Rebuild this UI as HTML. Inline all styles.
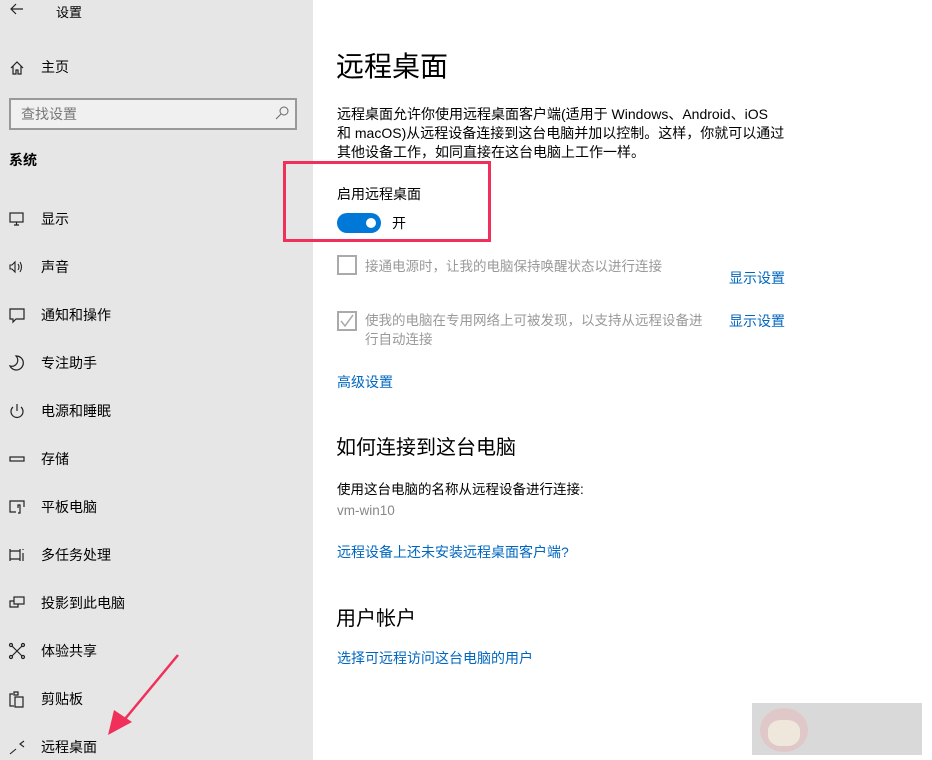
<!DOCTYPE html><html><head><meta charset="utf-8"><style>
*{margin:0;padding:0;box-sizing:border-box}
body{width:932px;height:760px;overflow:hidden;background:#fff;font-family:"Liberation Sans","Noto Sans CJK SC",sans-serif;color:#000;position:relative;font-size:14px}
.side{position:absolute;left:0;top:0;width:313px;height:760px;background:#e6e6e6}
.a{position:absolute;white-space:nowrap}
.it{position:absolute;left:41px;font-size:14px;line-height:20px}
.ic{position:absolute;left:8px;width:18px;height:18px}
.link{color:#0067c0}
.gray{color:#999}
</style></head><body>
<div class="side">
<svg class="a" style="left:10px;top:3px" width="14" height="12" viewBox="0 0 14 12" fill="none" stroke="#222" stroke-width="1.2"><path d="M13 6H2M6 1L1 6l5 5"/></svg>
<div class="a" style="left:56px;top:2px;font-size:13px">设置</div>
<svg class="ic" style="top:59px" viewBox="0 0 18 18" fill="none" stroke="#222" stroke-width="1.2"><path d="M3 9L9 3l6 6M5 7v8h3v-4h2v4h3V7"/></svg>
<div class="it" style="top:57px">主页</div>
<div class="a" style="left:9px;top:98px;width:288px;height:32px;border:2px solid #999;background:#f0f0f0"></div>
<div class="a gray" style="left:21px;top:104px;font-size:14px;color:#777">查找设置</div>
<svg class="a" style="left:274px;top:105px" width="16" height="16" viewBox="0 0 16 16" fill="none" stroke="#666"><circle cx="10" cy="6" r="4"/><path d="M7 9l-5 5"/></svg>
<div class="a" style="left:9px;top:150px;font-size:14px;font-weight:bold">系统</div>
<svg class="ic" style="top:210px" viewBox="0 0 18 18" fill="none" stroke="#222" stroke-width="1.2"><rect x="2" y="3" width="13" height="9"/><path d="M8.5 12v3M6 15h5"/></svg>
<div class="it" style="top:209px">显示</div>
<svg class="ic" style="top:258px" viewBox="0 0 18 18" fill="none" stroke="#222" stroke-width="1.1"><path d="M2 7h2l3-3v10l-3-3H2z M10 6q2 3 0 6M12 4q3 5 0 10"/></svg>
<div class="it" style="top:257px">声音</div>
<svg class="ic" style="top:306px" viewBox="0 0 18 18" fill="none" stroke="#222" stroke-width="1.2"><path d="M2 3h14v10H8l-3 3v-3H2z"/></svg>
<div class="it" style="top:305px">通知和操作</div>
<svg class="ic" style="top:354px" viewBox="0 0 18 18" fill="none" stroke="#222" stroke-width="1.2"><path d="M8 2a7 7 0 1 1-6 10 6 6 0 0 0 6-10z"/></svg>
<div class="it" style="top:353px">专注助手</div>
<svg class="ic" style="top:402px" viewBox="0 0 18 18" fill="none" stroke="#222" stroke-width="1.2"><path d="M9 2v7M5 5a6 6 0 1 0 8 0"/></svg>
<div class="it" style="top:401px">电源和睡眠</div>
<svg class="ic" style="top:450px" viewBox="0 0 18 18" fill="none" stroke="#222" stroke-width="1.2"><rect x="2" y="7" width="14" height="4"/></svg>
<div class="it" style="top:449px">存储</div>
<svg class="ic" style="top:498px" viewBox="0 0 18 18" fill="none" stroke="#222" stroke-width="1.2"><path d="M8 14H2V3h14v6M10 10v-3h2v8h-2"/></svg>
<div class="it" style="top:497px">平板电脑</div>
<svg class="ic" style="top:546px" viewBox="0 0 18 18" fill="none" stroke="#222" stroke-width="1.2"><path d="M2 3v12M12 3v12M2 5h10M2 13h10M15 3v1M15 7v8"/></svg>
<div class="it" style="top:545px">多任务处理</div>
<svg class="ic" style="top:594px" viewBox="0 0 18 18" fill="none" stroke="#222" stroke-width="1.2"><rect x="6" y="3" width="10" height="7"/><path d="M6 7H2v6h8v-3"/></svg>
<div class="it" style="top:593px">投影到此电脑</div>
<svg class="ic" style="top:642px" viewBox="0 0 18 18" fill="none" stroke="#222" stroke-width="1.2"><circle cx="3" cy="3" r="1.5"/><circle cx="15" cy="3" r="1.5"/><circle cx="3" cy="15" r="1.5"/><circle cx="15" cy="15" r="1.5"/><path d="M4 4l10 10M14 4L4 14"/></svg>
<div class="it" style="top:641px">体验共享</div>
<svg class="ic" style="top:690px" viewBox="0 0 18 18" fill="none" stroke="#222" stroke-width="1.2"><path d="M5 4H2v12h4M6 2h4v3H6zM7 7h8v10H7z"/></svg>
<div class="it" style="top:689px">剪贴板</div>
<svg class="ic" style="top:738px" viewBox="0 0 18 18" fill="none" stroke="#222" stroke-width="1.1"><path d="M2 16l6-5M16 3l-4 3 4 3"/></svg>
<div class="it" style="top:737px">远程桌面</div>
</div>
<svg class="a" style="left:100px;top:650px" width="85" height="90"><path d="M78 5L20 75" stroke="#f0305a" stroke-width="2.5"/><path d="M8 85L14 60 32 72z" fill="#f0305a"/></svg>
<div class="a" style="left:336px;top:48px;font-size:28px;line-height:38px">远程桌面</div>
<div class="a" style="left:337px;top:105px;font-size:14px;line-height:19px">远程桌面允许你使用远程桌面客户端(适用于 Windows、Android、iOS<br>和 macOS)从远程设备连接到这台电脑并加以控制。这样，你就可以通过<br>其他设备工作，如同直接在这台电脑上工作一样。</div>
<div class="a" style="left:283px;top:161px;width:208px;height:81px;border:3px solid #f0305a"></div>
<div class="a" style="left:337px;top:184px;font-size:14px">启用远程桌面</div>
<div class="a" style="left:337px;top:213px;width:44px;height:20px;border-radius:10px;background:#0078d7"></div>
<div class="a" style="left:366px;top:218px;width:10px;height:10px;border-radius:5px;background:#fff"></div>
<div class="a" style="left:392px;top:213px;font-size:14px">开</div>
<div class="a" style="left:337px;top:255px;width:20px;height:20px;border:2px solid #aaa"></div>
<div class="a gray" style="left:365px;top:255px;font-size:13.5px">接通电源时，让我的电脑保持唤醒状态以进行连接</div>
<div class="a link" style="left:729px;top:268px;font-size:14px">显示设置</div>
<div class="a" style="left:337px;top:311px;width:20px;height:20px;border:2px solid #aaa"></div>
<svg class="a" style="left:339px;top:313px" width="16" height="16"><path d="M2 8l4 5 8-11" stroke="#aaa" stroke-width="1.5" fill="none"/></svg>
<div class="a gray" style="left:365px;top:311px;font-size:13.5px;line-height:19px">使我的电脑在专用网络上可被发现，以支持从远程设备进<br>行自动连接</div>
<div class="a link" style="left:729px;top:311px;font-size:14px">显示设置</div>
<div class="a link" style="left:337px;top:372px;font-size:14px">高级设置</div>
<div class="a" style="left:336px;top:431px;font-size:20px">如何连接到这台电脑</div>
<div class="a" style="left:337px;top:478px;font-size:13.5px">使用这台电脑的名称从远程设备进行连接:</div>
<div class="a" style="left:337px;top:503px;font-size:13.5px;color:#888">vm-win10</div>
<div class="a link" style="left:337px;top:542px;font-size:14px">远程设备上还未安装远程桌面客户端?</div>
<div class="a" style="left:336px;top:602px;font-size:20px">用户帐户</div>
<div class="a link" style="left:337px;top:648px;font-size:14px">选择可远程访问这台电脑的用户</div>
<div class="a" style="left:752px;top:703px;width:170px;height:52px;background:#d9d9d9"></div>
<div class="a" style="left:760px;top:708px;width:48px;height:44px;border-radius:50%;background:#e0c8c8"></div>
<div class="a" style="left:768px;top:720px;width:32px;height:26px;border-radius:40%;background:#efe6dc"></div>
</body></html>
